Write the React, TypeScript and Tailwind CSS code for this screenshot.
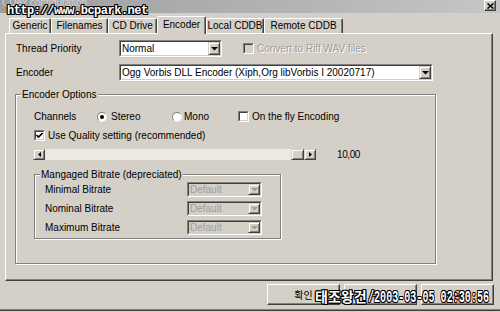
import React from "react";

const outline =
  "[text-shadow:1px_0_0_#000,-1px_0_0_#000,0_1px_0_#000,0_-1px_0_#000,1px_1px_0_#000,-1px_-1px_0_#000,1px_-1px_0_#000,-1px_1px_0_#000]";

function DownArrow({ disabled }: { disabled?: boolean }) {
  return (
    <svg width="7" height="4" viewBox="0 0 7 4">
      <path d="M0 0H7L3.5 3.6Z" fill={disabled ? "#a09d96" : "#000"} />
    </svg>
  );
}

function Select({
  value,
  className,
  disabled,
}: {
  value: string;
  className: string;
  disabled?: boolean;
}) {
  return (
    <div
      className={`${className} border border-t-[#808080] border-l-[#808080] border-r-white border-b-white ${
        disabled ? "bg-[#d4d0c8]" : "bg-white"
      }`}
    >
      <div className="flex h-full border border-t-[#404040] border-l-[#404040] border-r-[#d4d0c8] border-b-[#d4d0c8]">
        <span
          className={`flex-1 flex items-center pl-[1px] leading-none whitespace-nowrap overflow-hidden ${
            disabled ? "text-[#a09d96]" : "text-black"
          }`}
        >
          {value}
        </span>
        <div className="w-[12px] h-full flex items-center justify-center bg-[#d4d0c8] border border-t-[#d4d0c8] border-l-[#d4d0c8] border-r-[#404040] border-b-[#404040] shadow-[inset_1px_1px_0_#fff,inset_-1px_-1px_0_#808080]">
          <DownArrow disabled={disabled} />
        </div>
      </div>
    </div>
  );
}

function Checkbox({ checked, disabled }: { checked?: boolean; disabled?: boolean }) {
  return (
    <div
      className={`w-[11px] h-[11px] shrink-0 border border-t-[#808080] border-l-[#808080] border-r-white border-b-white ${
        disabled ? "bg-[#d4d0c8]" : "bg-white"
      }`}
    >
      <div className="w-full h-full flex items-center justify-center border border-t-[#404040] border-l-[#404040] border-r-[#d4d0c8] border-b-[#d4d0c8]">
        {checked && (
          <svg width="7" height="7" viewBox="0 0 7 7">
            <path d="M0.5 3 L2.5 5 L6.5 1" stroke="#000" strokeWidth="1.6" fill="none" />
          </svg>
        )}
      </div>
    </div>
  );
}

function Radio({ checked }: { checked?: boolean }) {
  return (
    <div className="w-[10px] h-[10px] shrink-0 rounded-full bg-white border border-t-[#808080] border-l-[#808080] border-r-[#eeeeee] border-b-[#eeeeee] flex items-center justify-center">
      {checked && <div className="w-[4px] h-[4px] rounded-full bg-black" />}
    </div>
  );
}

function Tab({ label, className, selected }: { label: string; className: string; selected?: boolean }) {
  if (selected) {
    return (
      <div
        className={`${className} h-[18px] -mb-[1px] relative z-10 bg-[#d4d0c8] flex items-start justify-center pt-[3px] border-t border-l border-r border-t-white border-l-white border-r-[#404040] shadow-[inset_-1px_0_0_#808080] rounded-t-[2px]`}
      >
        {label}
      </div>
    );
  }
  return (
    <div
      className={`${className} h-[15px] flex items-start justify-center pt-[2px] border-t border-l border-r border-t-white border-l-white border-r-[#404040] shadow-[inset_-1px_0_0_#808080] rounded-t-[2px]`}
    >
      {label}
    </div>
  );
}

function ScrollBtn({ dir }: { dir: "l" | "r" }) {
  return (
    <div className="w-[12px] h-[11px] shrink-0 flex items-center justify-center bg-[#d4d0c8] border border-t-[#d4d0c8] border-l-[#d4d0c8] border-r-[#404040] border-b-[#404040] shadow-[inset_1px_1px_0_#fff,inset_-1px_-1px_0_#808080]">
      <svg width="3" height="5" viewBox="0 0 3 5">
        {dir === "l" ? <path d="M3 0V5L0 2.5Z" fill="#000" /> : <path d="M0 0V5L3 2.5Z" fill="#000" />}
      </svg>
    </div>
  );
}

function Button({ label }: { label: string }) {
  return (
    <div className="w-[73px] h-[21px] flex items-center justify-center bg-[#d4d0c8] border border-t-white border-l-white border-r-[#404040] border-b-[#404040] shadow-[inset_-1px_-1px_0_#808080] font-['Noto_Sans_CJK_KR',sans-serif] text-[10px] text-black">
      {label}
    </div>
  );
}

export default function App() {
  return (
    <div className="relative w-[500px] h-[312px] overflow-hidden bg-[#d4d0c8] flex flex-col font-['Liberation_Sans','Noto_Sans_CJK_KR',sans-serif] text-[10px] text-black leading-none">
      {/* Title bar */}
      <div className="h-[13px] shrink-0 flex items-start justify-between bg-[linear-gradient(to_right,#9e9e9e,#b4b4b4_60%,#c6c6c6)] overflow-hidden">
        <span className="ml-[2px] -mt-[3px] text-[10px] text-[#d2d2d2] leading-[12px]">CDex configuration</span>
        <div className="mr-[4px] w-[12px] h-[11px] flex items-center justify-center bg-[#d4d0c8] border border-t-white border-l-white border-r-[#404040] border-b-[#404040] shadow-[inset_-1px_-1px_0_#808080]">
          <svg width="7" height="6" viewBox="0 0 7 6">
            <path d="M0.5 0.5L6.5 5.5M6.5 0.5L0.5 5.5" stroke="#000" strokeWidth="1.5" />
          </svg>
        </div>
      </div>

      {/* Tabs */}
      <div className="mt-[3px] h-[17px] shrink-0 flex items-end pl-[9px]">
        <Tab label="Generic" className="w-[42px]" />
        <Tab label="Filenames" className="w-[57px]" />
        <Tab label="CD Drive" className="w-[49px]" />
        <Tab label="Encoder" className="w-[49px]" selected />
        <Tab label="Local CDDB" className="w-[58px]" />
        <Tab label="Remote CDDB" className="w-[79px]" />
      </div>

      {/* Panel */}
      <div className="ml-[5px] w-[488px] h-[248px] shrink-0 flex flex-col pt-[6px] pl-[9px] border border-t-white border-l-white border-r-[#404040] border-b-[#404040] shadow-[inset_-1px_-1px_0_#808080]">
        <div className="h-[17px] flex items-center pl-[1px]">
          <span className="w-[103px]">Thread Priority</span>
          <Select value="Normal" className="w-[103px] h-[17px]" />
          <div className="ml-[21px]">
            <Checkbox disabled />
          </div>
          <span className="ml-[3px] text-[#a09d96] [text-shadow:1px_1px_0_#fff]">Convert to Riff WAV files</span>
        </div>

        <div className="mt-[7px] h-[17px] flex items-center pl-[1px]">
          <span className="w-[103px]">Encoder</span>
          <Select
            value="Ogg Vorbis DLL Encoder (Xiph,Org libVorbis I 20020717)"
            className="w-[314px] h-[17px]"
          />
        </div>

        {/* Encoder Options group */}
        <div className="relative mt-[13px] w-[421px] h-[170px] flex flex-col pt-[15px] pl-[18px] border border-[#808080] shadow-[inset_1px_1px_0_#fff,1px_1px_0_#fff]">
          <span className="absolute -top-[6px] left-[5px] px-[1px] bg-[#d4d0c8] leading-[11px]">Encoder Options</span>

          <div className="h-[13px] flex items-center">
            <span className="w-[63px]">Channels</span>
            <div className="w-[75px] flex items-center">
              <Radio checked />
              <span className="ml-[4px]">Stereo</span>
            </div>
            <div className="w-[66px] flex items-center">
              <Radio />
              <span className="ml-[2px]">Mono</span>
            </div>
            <Checkbox />
            <span className="ml-[3px]">On the fly Encoding</span>
          </div>

          <div className="mt-[7px] h-[11px] flex items-center">
            <Checkbox checked />
            <span className="ml-[3px]">Use Quality setting (recommended)</span>
          </div>

          <div className="mt-[8px] -ml-[1px] h-[11px] flex items-center">
            <div className="w-[283px] h-[11px] flex">
              <ScrollBtn dir="l" />
              <div className="flex-1 flex justify-end bg-[#ebe9e4]">
                <div className="w-[13px] h-[11px] bg-[#d4d0c8] border border-t-[#d4d0c8] border-l-[#d4d0c8] border-r-[#404040] border-b-[#404040] shadow-[inset_1px_1px_0_#fff,inset_-1px_-1px_0_#808080]" />
              </div>
              <ScrollBtn dir="r" />
            </div>
            <span className="ml-[21px] tracking-[-0.4px]">10,00</span>
          </div>

          {/* Managed Bitrate group */}
          <div className="relative mt-[14px] w-[247px] h-[65px] flex flex-col gap-[4px] pt-[7px] pl-[10px] border border-[#808080] shadow-[inset_1px_1px_0_#fff,1px_1px_0_#fff]">
            <span className="absolute -top-[6px] left-[5px] px-[1px] bg-[#d4d0c8] leading-[11px]">
              Mangaged Bitrate (depreciated)
            </span>
            <div className="h-[15px] flex items-center">
              <span className="w-[142px]">Minimal Bitrate</span>
              <Select value="Default" className="w-[75px] h-[15px]" disabled />
            </div>
            <div className="h-[15px] flex items-center">
              <span className="w-[142px]">Nominal Bitrate</span>
              <Select value="Default" className="w-[75px] h-[15px]" disabled />
            </div>
            <div className="h-[15px] flex items-center">
              <span className="w-[142px]">Maximum Bitrate</span>
              <Select value="Default" className="w-[75px] h-[15px]" disabled />
            </div>
          </div>
        </div>
      </div>

      {/* Buttons */}
      <div className="mt-[3px] flex justify-end gap-[4px] pr-[6px]">
        <Button label="확인" />
        <Button label="취소" />
        <Button label="도움말" />
      </div>

      <div className="flex-1" />
      <div className="h-[1px] bg-[#808080]" />
      <div className="h-[1px] mb-[1px] bg-[#404040]" />

      {/* Watermarks */}
      <div
        className={`absolute left-[7px] top-[5px] font-['Liberation_Mono',monospace] font-bold text-[12px] leading-[12px] tracking-[-0.5px] text-white ${outline}`}
      >
        http://www.bcpark.net
      </div>
      <div className={`absolute left-[315px] top-[288px] flex items-baseline text-white whitespace-nowrap ${outline}`}>
        <span className="font-['Noto_Sans_CJK_KR',sans-serif] font-bold text-[14px] leading-[16px]">
          태조왕건
        </span>
        <span className="ml-[1px] inline-block origin-left scale-x-[0.63] font-['Liberation_Mono',monospace] font-bold text-[16px] leading-[16px]">
          /2003-03-05 02:30:56
        </span>
      </div>
    </div>
  );
}
